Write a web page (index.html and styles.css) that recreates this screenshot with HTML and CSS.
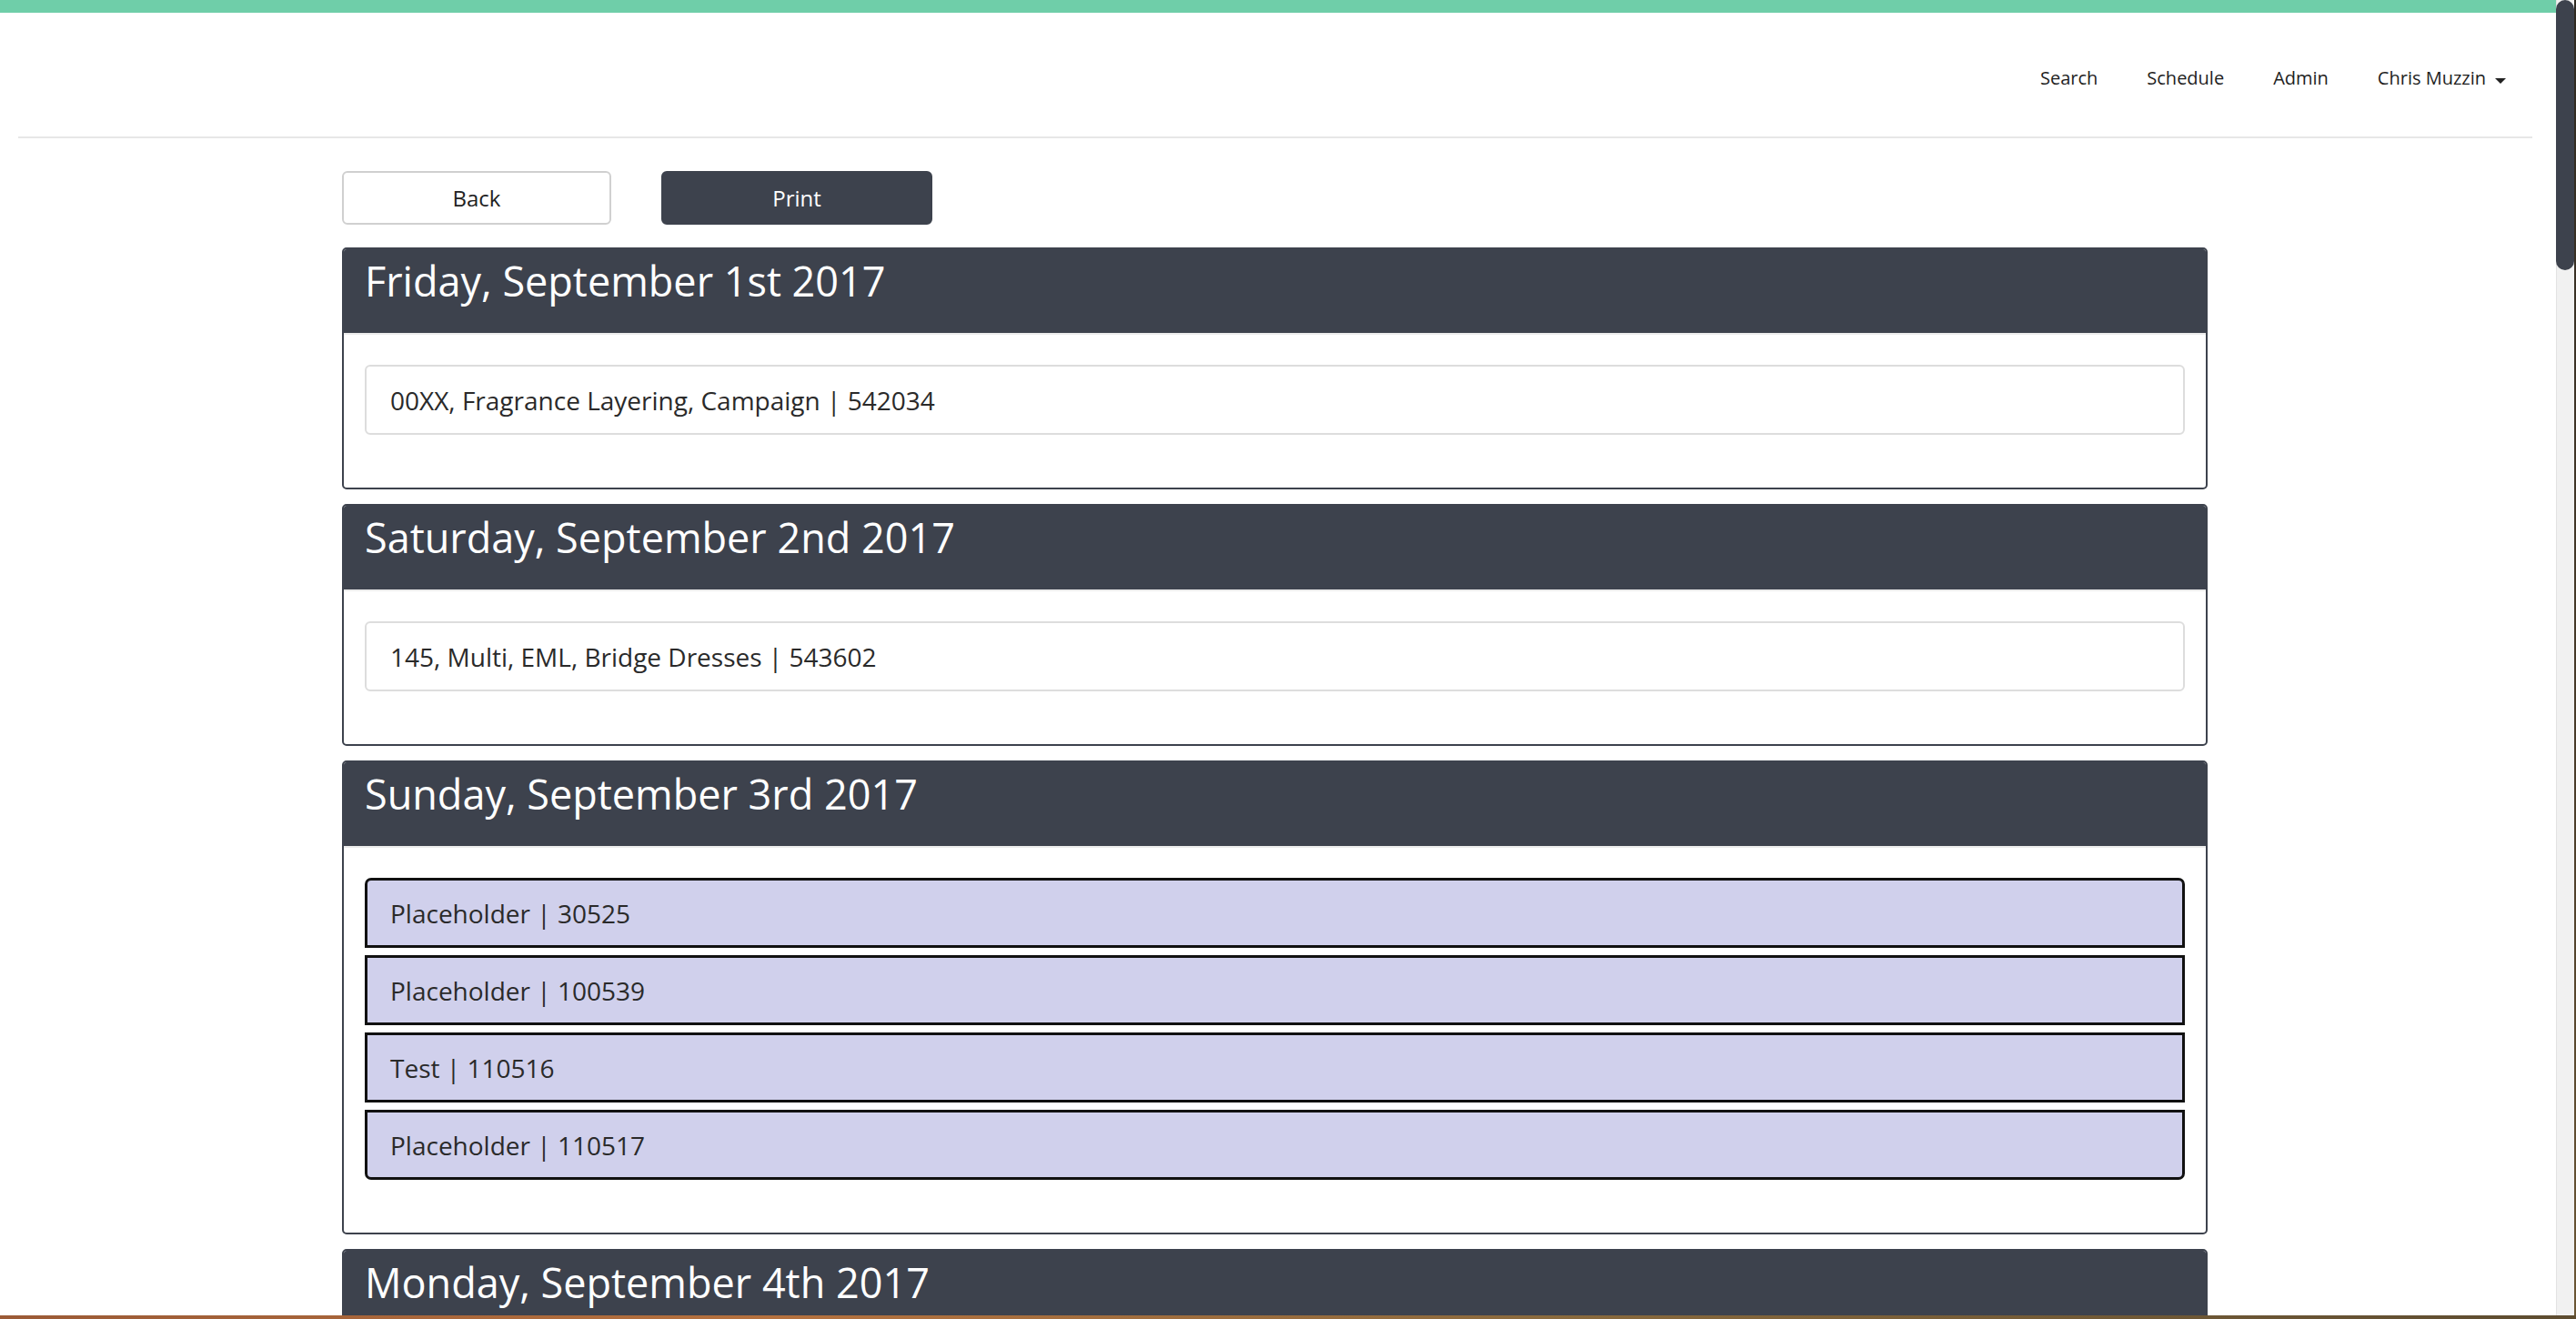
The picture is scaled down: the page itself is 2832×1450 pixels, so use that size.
FILE: index.html
```html
<!DOCTYPE html>
<html lang="en">
<head>
<meta charset="utf-8">
<title>Schedule</title>
<link rel="stylesheet" href="styles.css">
</head>
<body>
<div class="screen">
  <div class="window">
    <div class="viewport">
      <div class="topbar"></div>
      <nav class="navbar">
        <a class="nav-link">Search</a>
        <a class="nav-link">Schedule</a>
        <a class="nav-link">Admin</a>
        <a class="nav-link">Chris Muzzin<span class="caret"></span></a>
      </nav>
      <main class="content">
        <div class="actions">
          <button class="btn btn-back">Back</button>
          <button class="btn btn-print">Print</button>
        </div>
        <section class="day">
          <h2 class="day-title">Friday, September 1st 2017</h2>
          <div class="day-body">
            <div class="entry entry-plain">00XX, Fragrance Layering, Campaign | 542034</div>
          </div>
        </section>
        <section class="day">
          <h2 class="day-title">Saturday, September 2nd 2017</h2>
          <div class="day-body">
            <div class="entry entry-plain">145, Multi, EML, Bridge Dresses | 543602</div>
          </div>
        </section>
        <section class="day">
          <h2 class="day-title">Sunday, September 3rd 2017</h2>
          <div class="day-body">
            <div class="entry-list">
              <div class="entry entry-hold">Placeholder | 30525</div>
              <div class="entry entry-hold">Placeholder | 100539</div>
              <div class="entry entry-hold">Test | 110516</div>
              <div class="entry entry-hold">Placeholder | 110517</div>
            </div>
          </div>
        </section>
        <section class="day">
          <h2 class="day-title">Monday, September 4th 2017</h2>
          <div class="day-body">
            <div class="entry entry-plain">&nbsp;</div>
          </div>
        </section>
      </main>
    </div>
    <div class="scrollbar"><div class="thumb"></div></div>
  </div>
  <div class="desktop-strip"></div>
</div>
</body>
</html>
```
FILE: styles.css
```css
html, body {
  margin: 0;
  padding: 0;
}
body {
  width: 2832px;
  height: 1450px;
  overflow: hidden;
  background: linear-gradient(180deg, #2f2a22 0%, #4a3c2a 60%, #6b5634 100%);
  font-family: "Open Sans", "Noto Sans", "Liberation Sans", sans-serif;
  color: #333;
}
.screen {
  display: flex;
  flex-direction: column;
  height: 1450px;
}
.window {
  display: flex;
  width: 2830px;
  height: 1446px;
  overflow: hidden;
  background: #fff;
}
.viewport {
  flex: 1;
  min-width: 0;
  display: flex;
  flex-direction: column;
  overflow: hidden;
  background: #fff;
}
.topbar {
  height: 14px;
  flex: none;
  background: #6fcea9;
}
.navbar {
  flex: none;
  box-sizing: border-box;
  height: 138px;
  margin: 0 26px 0 20px;
  padding: 8px 2px 0 0;
  border-bottom: 2px solid #e7e7e7;
  display: flex;
  justify-content: flex-end;
  align-items: center;
}
.nav-link {
  font-size: 20px;
  line-height: 28px;
  padding: 0 27px;
  color: #1e1e1e;
  display: flex;
  align-items: center;
}
.caret {
  display: inline-block;
  width: 0;
  height: 0;
  margin: 5px 0 0 10px;
  border-top: 6px solid #222;
  border-left: 6px solid transparent;
  border-right: 6px solid transparent;
}
.content {
  flex: none;
  width: 2051px;
  margin-left: 376px;
}
.actions {
  display: flex;
  gap: 55px;
  margin-top: 36px;
  margin-bottom: 25px;
}
.btn {
  box-sizing: border-box;
  width: 296px;
  height: 59px;
  border-radius: 6px;
  font-family: "Open Sans", "Noto Sans", "Liberation Sans", sans-serif;
  font-size: 24px;
  padding: 0;
  cursor: pointer;
}
.btn-back {
  background: #fff;
  border: 2px solid #d0d0d0;
  color: #222;
}
.btn-print {
  width: 298px;
  background: #3d424d;
  border: 2px solid #3d424d;
  color: #fff;
}
.day {
  border: 2px solid #3d424d;
  border-radius: 5px;
  margin-bottom: 16px;
  background: #fff;
  overflow: hidden;
}
.day-title {
  margin: 0;
  padding: 11px 23px 33px;
  font-size: 45px;
  line-height: 48px;
  font-weight: 400;
  color: #fff;
  background: #3d424d;
  border-bottom: 2px solid #ececec;
}
.day-body {
  padding: 33px 23px 58px;
}
.entry {
  box-sizing: border-box;
  height: 77px;
  display: flex;
  align-items: center;
  font-size: 28px;
  color: #2a2a2a;
}
.entry-plain {
  border: 2px solid #ddd;
  border-radius: 6px;
  padding-left: 26px;
}
.entry-list {
  display: flex;
  flex-direction: column;
  gap: 8px;
}
.entry-hold {
  background: #d0d0ec;
  border: 3px solid #111;
  padding-left: 25px;
}
.entry-hold:first-child {
  border-top-left-radius: 7px;
  border-top-right-radius: 7px;
}
.entry-hold:last-child {
  border-bottom-left-radius: 7px;
  border-bottom-right-radius: 7px;
}
.scrollbar {
  flex: none;
  width: 20px;
  background: #f1f1f1;
  box-shadow: inset 1px 0 0 #e2e2e2;
}
.thumb {
  height: 297px;
  background: #3d424d;
  border-radius: 10px;
}
.desktop-strip {
  height: 4px;
  background: linear-gradient(90deg, #9b5a36 0%, #b5713f 30%, #8a6a3e 60%, #5d4c30 100%);
}
```
